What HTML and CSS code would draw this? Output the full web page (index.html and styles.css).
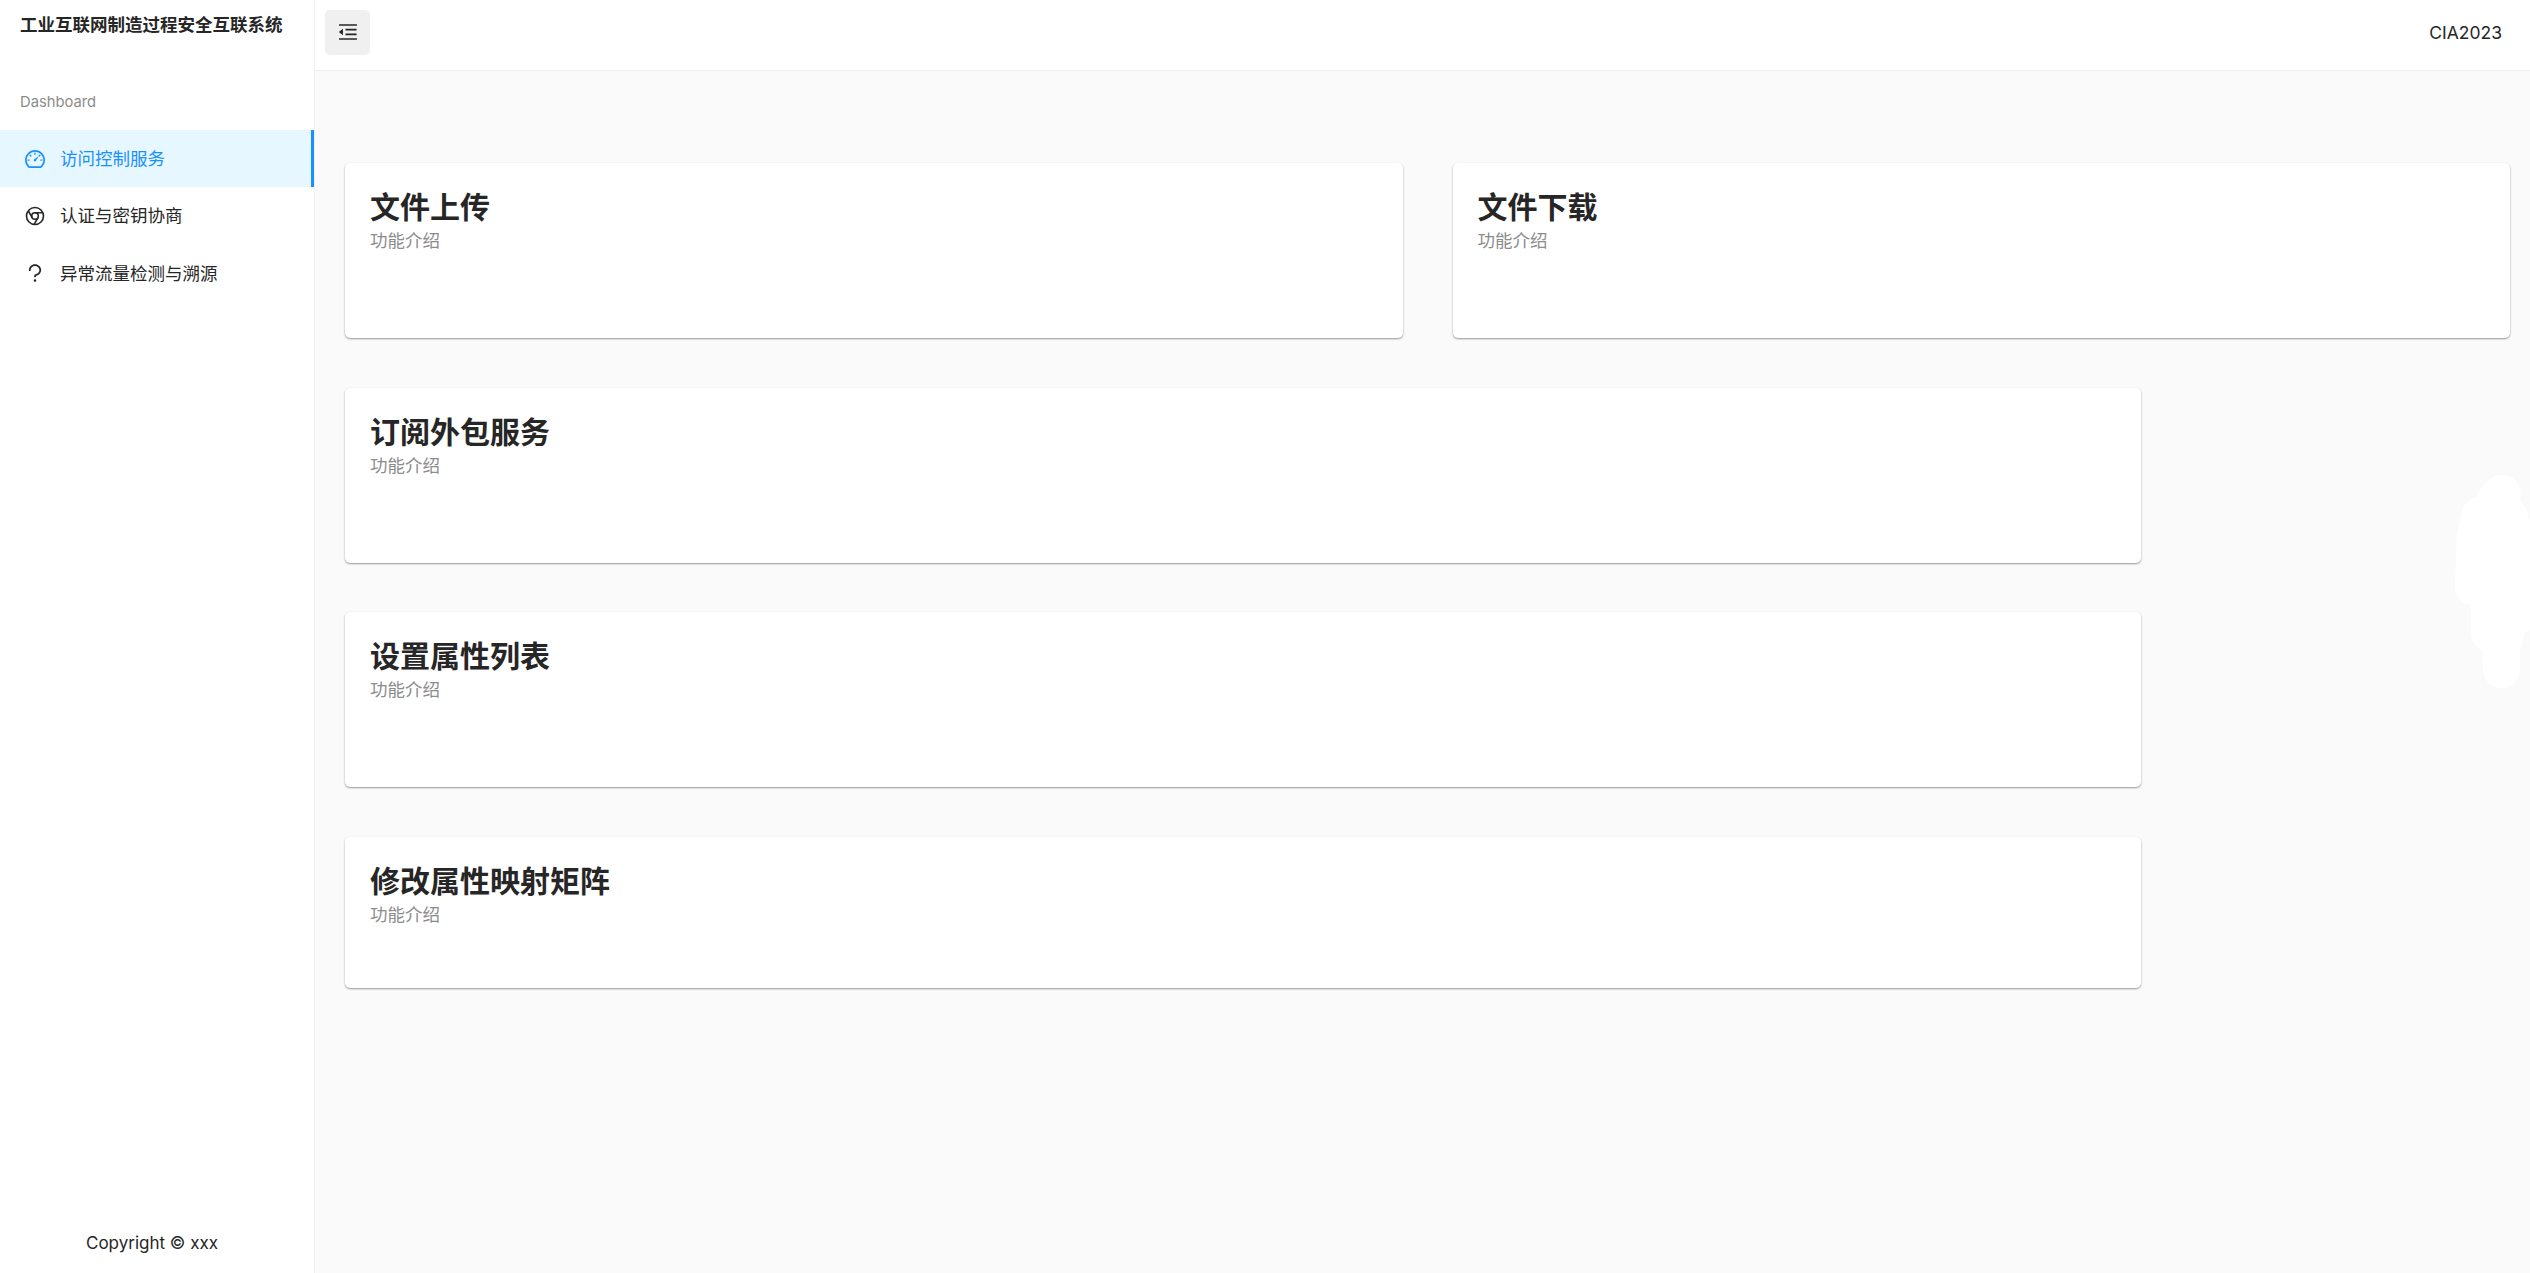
FILE: index.html
```html
<!DOCTYPE html>
<html lang="en">
<head>
    <meta charset="UTF-8">
    <title>Dashboard</title>
    <link rel="stylesheet" href="styles.css">
</head>
<body>
    <aside class="sidebar">
        <div class="logo">工业互联网制造过程安全互联系统</div>
        <div class="nav-group">Dashboard</div>
        <nav class="nav">
            <a class="nav-item active">
                <svg class="nav-icon" viewBox="64 64 896 896" fill="currentColor"><path d="M924.8 385.6a446.7 446.7 0 00-96-142.4 446.7 446.7 0 00-142.4-96C631.1 123.8 572.5 112 512 112s-119.1 11.8-174.4 35.2a446.7 446.7 0 00-142.4 96 446.7 446.7 0 00-96 142.4C75.8 440.9 64 499.5 64 560c0 132.7 58.3 257.7 159.9 343.1l1.7 1.4c5.8 4.8 13.1 7.5 20.6 7.5h531.7c7.5 0 14.8-2.7 20.6-7.5l1.7-1.4C901.7 817.7 960 692.7 960 560c0-60.5-11.9-119.1-35.2-174.4zM761.4 836H262.6A371.12 371.12 0 01140 560c0-99.4 38.7-192.8 109-263 70.3-70.3 163.7-109 263-109 99.4 0 192.8 38.7 263 109 70.3 70.3 109 163.7 109 263 0 105.6-44.5 205.5-122.6 276zM623.5 421.5a8.03 8.03 0 00-11.3 0L527.7 506c-18.7-5-39.4-.2-54.1 14.5a55.95 55.95 0 000 79.2 55.95 55.95 0 0079.2 0 55.87 55.87 0 0014.5-54.1l84.5-84.5c3.1-3.1 3.1-8.2 0-11.3l-28.3-28.3zM490 320h44c4.4 0 8-3.6 8-8v-80c0-4.4-3.6-8-8-8h-44c-4.4 0-8 3.6-8 8v80c0 4.4 3.6 8 8 8zm260 218v44c0 4.4 3.6 8 8 8h80c4.4 0 8-3.6 8-8v-44c0-4.4-3.6-8-8-8h-80c-4.4 0-8 3.6-8 8zm12.7-197.2l-31.1-31.1a8.03 8.03 0 00-11.3 0l-56.6 56.6a8.03 8.03 0 000 11.3l31.1 31.1c3.1 3.1 8.2 3.1 11.3 0l56.6-56.6c3.1-3.1 3.1-8.2 0-11.3zm-458.6-31.1a8.03 8.03 0 00-11.3 0l-31.1 31.1a8.03 8.03 0 000 11.3l56.6 56.6c3.1 3.1 8.2 3.1 11.3 0l31.1-31.1c3.1-3.1 3.1-8.2 0-11.3l-56.6-56.6zM262 530h-80c-4.4 0-8 3.6-8 8v44c0 4.4 3.6 8 8 8h80c4.4 0 8-3.6 8-8v-44c0-4.4-3.6-8-8-8z"/></svg>
                <span class="nav-label">访问控制服务</span>
            </a>
            <a class="nav-item">
                <svg class="nav-icon" viewBox="0 0 20 20" fill="none" stroke="currentColor" stroke-width="1.6"><circle cx="10" cy="10" r="8.5"/><circle cx="10" cy="10" r="3.3"/><path d="M10 6.7h7.4M7.2 11.7L3.4 5M12.9 11.6L9.2 18.4"/></svg>
                <span class="nav-label">认证与密钥协商</span>
            </a>
            <a class="nav-item">
                <svg class="nav-icon" viewBox="64 64 896 896" fill="currentColor"><path d="M764 280.9c-14-30.6-33.9-58.1-59.3-81.6C653.1 151.4 584.6 125 512 125s-141.1 26.4-192.7 74.2c-25.4 23.6-45.3 51-59.3 81.7-14.6 32-22 65.9-22 100.9v27c0 6.2 5 11.2 11.2 11.2h54c6.2 0 11.2-5 11.2-11.2v-27c0-99.5 88.6-180.4 197.6-180.4s197.6 80.9 197.6 180.4c0 40.8-14.5 79.2-42 111.2-27.2 31.7-65.6 54.4-108.1 64-24.3 5.5-46.2 19.2-61.7 38.8a110.85 110.85 0 00-23.9 68.6v31.4c0 6.2 5 11.2 11.2 11.2h54c6.2 0 11.2-5 11.2-11.2v-31.4c0-15.7 10.9-29.5 26-32.9 58.4-13.2 111.4-44.7 149.3-88.7 19.1-22.3 34-47.1 44.3-74 10.7-27.9 16.1-57.2 16.1-87 0-35-7.4-69-22-100.9zM512 787c-30.9 0-56 25.1-56 56s25.1 56 56 56 56-25.1 56-56-25.1-56-56-56z"/></svg>
                <span class="nav-label">异常流量检测与溯源</span>
            </a>
        </nav>
        <div class="copyright">Copyright © xxx</div>
    </aside>
    <div class="page">
        <header class="topbar">
            <button class="toggle" type="button">
                <svg viewBox="64 64 896 896" fill="currentColor"><path d="M408 442h480c4.4 0 8-3.6 8-8v-56c0-4.4-3.6-8-8-8H408c-4.4 0-8 3.6-8 8v56c0 4.4 3.6 8 8 8zm-8 204c0 4.4 3.6 8 8 8h480c4.4 0 8-3.6 8-8v-56c0-4.4-3.6-8-8-8H408c-4.4 0-8 3.6-8 8v56zm504-486H120c-4.4 0-8 3.6-8 8v56c0 4.4 3.6 8 8 8h784c4.4 0 8-3.6 8-8v-56c0-4.4-3.6-8-8-8zm0 632H120c-4.4 0-8 3.6-8 8v56c0 4.4 3.6 8 8 8h784c4.4 0 8-3.6 8-8v-56c0-4.4-3.6-8-8-8zM115.4 518.9L271.7 642c5.8 4.6 14.4.5 14.4-6.9V388.9c0-7.4-8.5-11.5-14.4-6.9L115.4 505.1a8.74 8.74 0 000 13.8z"/></svg>
            </button>
            <div class="user">CIA2023</div>
        </header>
        <main class="content">
            <div class="card-row">
                <section class="card">
                    <h2>文件上传</h2>
                    <p>功能介绍</p>
                </section>
                <section class="card">
                    <h2>文件下载</h2>
                    <p>功能介绍</p>
                </section>
            </div>
            <section class="card wide">
                <h2>订阅外包服务</h2>
                <p>功能介绍</p>
            </section>
            <section class="card wide">
                <h2>设置属性列表</h2>
                <p>功能介绍</p>
            </section>
            <section class="card wide short">
                <h2>修改属性映射矩阵</h2>
                <p>功能介绍</p>
            </section>
        </main>
    </div>
    <svg class="blob" viewBox="0 0 390 840" fill="#fff"><path d="M305 135C340 135 362 160 362 190V215C378 228 385 245 385 265L390 270V600L375 605L360 660V710C360 750 335 775 305 775C272 775 248 750 248 710V660C225 650 213 635 213 610V525C185 520 165 500 165 470L170 320L185 250C190 225 205 208 230 200C240 175 265 135 305 135Z"/></svg>
</body>
</html>
```

FILE: styles.css
```css
* {
    box-sizing: border-box;
}
body {
    display: flex;
    height: 100vh;
    margin: 0;
    overflow: hidden;
    background: #fafafa;
    color: #262626;
    font-family: 'Inter', 'Noto Sans CJK SC', sans-serif;
}
.sidebar {
    display: flex;
    flex-direction: column;
    flex: none;
    width: 315px;
    background: #fff;
    border-right: 1px solid #f0f0f0;
}
.logo {
    height: 50px;
    padding-left: 20px;
    font-size: 17.5px;
    font-weight: 600;
    line-height: 50px;
    white-space: nowrap;
}
.nav-group {
    margin-top: 40px;
    padding-left: 20px;
    color: #8c8c8c;
    font-size: 14.75px;
    line-height: 24px;
}
.nav {
    margin-top: 16px;
}
.nav-item {
    display: flex;
    align-items: center;
    gap: 15px;
    height: 57.5px;
    padding-left: 25px;
    font-size: 17.5px;
}
.nav-item.active {
    height: 57px;
    background: #e6f7ff;
    border-right: 3px solid #1890ff;
    color: #1890ff;
}
.nav-label {
    margin-bottom: 2px;
}
.nav-icon {
    flex: none;
    width: 20px;
    height: 20px;
}
.copyright {
    margin-top: auto;
    padding: 0 10px 18px 0;
    font-size: 17px;
    line-height: 24px;
    text-align: center;
}
.page {
    flex: 1;
    min-width: 0;
}
.topbar {
    display: flex;
    justify-content: space-between;
    align-items: center;
    height: 71px;
    padding: 0 28px 6px 10px;
    background: #fff;
    border-bottom: 1px solid #f0f0f0;
}
.toggle {
    display: flex;
    justify-content: center;
    align-items: center;
    width: 45px;
    height: 45px;
    padding: 0;
    background: #f0f0f0;
    border: none;
    border-radius: 5px;
    color: #262626;
}
.toggle svg {
    width: 20px;
    height: 20px;
}
.user {
    font-size: 17.5px;
}
.content {
    display: flex;
    flex-direction: column;
    gap: 49.5px;
    padding: 92px 20px 0 30px;
}
.card-row {
    display: grid;
    grid-template-columns: 1fr 1fr;
    gap: 50px;
}
.card {
    height: 175px;
    padding: 26px 25px;
    background: #fff;
    border-radius: 5px;
    box-shadow: 0 1px 2px rgba(0, 0, 0, 0.4);
}
.card.wide {
    width: 1796px;
}
.card.short {
    height: 151px;
}
.card h2 {
    margin: 0;
    font-size: 30px;
    font-weight: 700;
    line-height: 36px;
}
.card p {
    margin: 3px 0 0;
    color: #8c8c8c;
    font-size: 17.5px;
    line-height: 26px;
}
.blob {
    position: absolute;
    top: 430px;
    right: 0;
    width: 130px;
    height: 280px;
}
```
